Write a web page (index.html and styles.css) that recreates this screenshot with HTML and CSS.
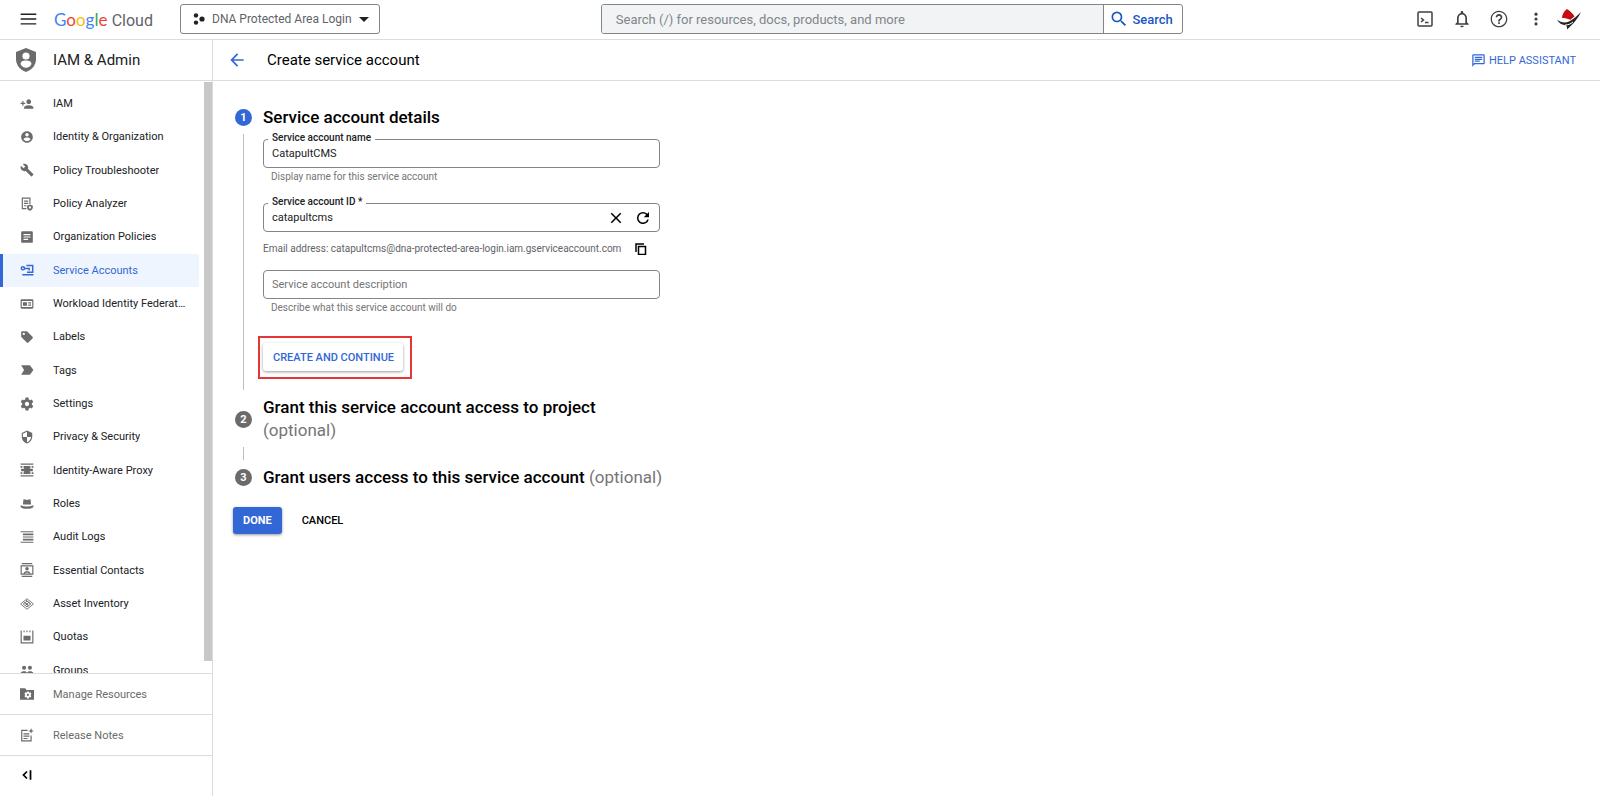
FILE: index.html
```html
<!DOCTYPE html>
<html lang="en">
<head>
    <meta charset="UTF-8">
    <meta name="viewport" content="width=device-width, initial-scale=1.0">
    <title>Create service account - IAM &amp; Admin - Google Cloud</title>
    <link rel="stylesheet" href="styles.css">
</head>
<body>
    <header class="topbar">
        <button class="icon-btn menu-btn" aria-label="Main menu">
            <svg viewBox="0 0 24 24" width="22" height="22"><path d="M4 18h17v-1.500H4zm0-5.200h17v-1.600H4zM4 6v1.500h17V6z"/></svg>
        </button>
        <a href="#" class="logo"><span class="google"><span class="blue">G</span><span class="red">o</span><span class="yellow">o</span><span class="blue">g</span><span class="green">l</span><span class="red">e</span></span> <span class="cloud">Cloud</span></a>
        <button class="project-btn">
            <svg viewBox="0 0 12 12" width="12" height="12"><circle cx="3" cy="2.4" r="2.2"/><circle cx="3" cy="9.6" r="2.2"/><circle cx="9" cy="6" r="2.6"/></svg>
            <span>DNA Protected Area Login</span>
            <svg viewBox="0 0 10 5" width="10" height="5"><path d="M0 0h10L5 5z"/></svg>
        </button>
        <form class="search">
            <input type="text" aria-label="Search" placeholder="Search (/) for resources, docs, products, and more">
            <button type="button">
                <svg viewBox="0 0 24 24" width="20" height="20"><path d="M15.500 14h-.79l-.28-.27A6.471 6.471 0 0 0 16 9.500 6.500 6.500 0 1 0 9.500 16c1.610 0 3.090-.59 4.230-1.570l.27.28v.79l5 4.990L20.490 19l-4.990-5zm-6 0C7.010 14 5 11.990 5 9.500S7.010 5 9.500 5 14 7.010 14 9.500 11.990 14 9.500 14z"/></svg>
                Search
            </button>
        </form>
        <div class="actions">
            <button class="icon-btn" aria-label="Cloud Shell">
                <svg viewBox="0 0 16 16" width="16" height="16" class="line-icon"><rect x="1" y="1" width="14" height="14" rx="1"/><path d="M4 7l2.500 2L4 11M8 11.500h3.500"/></svg>
            </button>
            <button class="icon-btn" aria-label="Notifications">
                <svg viewBox="0 0 24 24" width="20" height="20"><path d="M12 22c1.100 0 2-.9 2-2h-4c0 1.100.9 2 2 2zm6-6v-5c0-3.070-1.630-5.640-4.500-6.320V4c0-.83-.67-1.500-1.500-1.500s-1.500.67-1.500 1.500v.68C7.640 5.360 6 7.920 6 11v5l-2 2v1h16v-1l-2-2zm-2 1H8v-6c0-2.480 1.510-4.500 4-4.500s4 2.020 4 4.500v6z"/></svg>
            </button>
            <button class="icon-btn" aria-label="Help">
                <svg viewBox="0 0 24 24" width="20" height="20"><path d="M11 18h2v-2h-2v2zm1-16C6.480 2 2 6.480 2 12s4.480 10 10 10 10-4.480 10-10S17.520 2 12 2zm0 18.500c-4.700 0-8.500-3.800-8.500-8.500s3.800-8.500 8.500-8.500 8.500 3.800 8.500 8.500-3.800 8.500-8.500 8.500zm0-14.500c-2.210 0-4 1.790-4 4h2c0-1.100.9-2 2-2s2 .9 2 2c0 2-3 1.750-3 5h2c0-2.250 3-2.500 3-5 0-2.210-1.790-4-4-4z"/></svg>
            </button>
            <button class="icon-btn" aria-label="More options">
                <svg viewBox="0 0 24 24" width="18" height="18"><circle cx="12" cy="5.500" r="2.100"/><circle cx="12" cy="12" r="2.100"/><circle cx="12" cy="18.500" r="2.100"/></svg>
            </button>
            <button class="icon-btn avatar" aria-label="Account">
                <svg viewBox="0 0 24 22" width="24" height="22">
                    <path fill="#c30d10" d="M5 10C5 6.500 7 3 10 1c3 2 6 4.500 7.500 7.500L13 12c-2-1.500-5-2-8-2z"/>
                    <path fill="#222" d="M0 11.500c3.500 3 8 3.800 12 2 5-2.500 8-5.500 12-9.500-3 6-7 11.500-14 17.500.2-1.500 0-2.500-.8-4C5 17 1.500 15 0 11.500z"/>
                    <path fill="none" stroke="#fff" d="M1.500 11.500c3 2 7.500 2.300 11 .3M8 17c3 0 5.500-.8 8-3"/>
                </svg>
            </button>
        </div>
    </header>

    <div class="layout">
        <aside class="sidebar">
            <div class="section-title">
                <svg viewBox="0 0 20 24" width="20" height="24"><path fill="#6b6b6b" d="M10 0l10 4v7c0 6-4 11-10 13C4 22 0 17 0 11V4z"/><circle cx="10" cy="8" r="3.600" fill="#fff"/><path fill="#fff" d="M10 12.500c3 0 5.500 1 5.500 3.500-1.200 2.500-3 3.800-5.500 3.800S5.700 18.500 4.500 16c0-2.500 2.500-3.500 5.500-3.500z"/></svg>
                <span>IAM &amp; Admin</span>
            </div>
            <div class="nav-area">
                <nav>
                    <a href="#"><svg viewBox="0 0 24 24"><path d="M15 12c2.210 0 4-1.790 4-4s-1.790-4-4-4-4 1.790-4 4 1.790 4 4 4zm-9-2V7H4v3H1v2h3v3h2v-3h3v-2H6zm9 4c-2.670 0-8 1.340-8 4v2h16v-2c0-2.660-5.330-4-8-4z"/></svg><span>IAM</span></a>
                    <a href="#"><svg viewBox="0 0 24 24"><path d="M12 2C6.480 2 2 6.480 2 12s4.480 10 10 10 10-4.480 10-10S17.520 2 12 2zm0 3c1.660 0 3 1.340 3 3s-1.340 3-3 3-3-1.340-3-3 1.340-3 3-3zm0 14.200c-2.500 0-4.710-1.280-6-3.220.03-1.990 4-3.080 6-3.080 1.990 0 5.970 1.090 6 3.080-1.290 1.940-3.500 3.220-6 3.220z"/></svg><span>Identity &amp; Organization</span></a>
                    <a href="#"><svg viewBox="0 0 24 24"><path d="M22.700 19l-9.100-9.100c.9-2.300.4-5-1.500-6.900-2-2-5-2.400-7.400-1.300L9 6 6 9 1.600 4.700C.4 7.100.9 10.100 2.900 12.100c1.900 1.900 4.600 2.400 6.900 1.500l9.100 9.100c.4.4 1 .4 1.400 0l2.300-2.300c.5-.4.5-1.100.1-1.400z"/></svg><span>Policy Troubleshooter</span></a>
                    <a href="#"><svg viewBox="0 0 24 24"><path d="M3 1h15v11h-2V3H5v16h6v2H3zM7 6h7v2H7zm0 4h7v2H7zm0 4h4v2H7z"/><path d="M17 13l5 2v3c0 2.500-2 4.500-5 5.500-3-1-5-3-5-5.500v-3zm0 3a2 2 0 1 0 0 4 2 2 0 0 0 0-4z" fill-rule="evenodd"/></svg><span>Policy Analyzer</span></a>
                    <a href="#"><svg viewBox="0 0 24 24"><path fill-rule="evenodd" d="M4 2h16a2 2 0 0 1 2 2v16a2 2 0 0 1-2 2H4a2 2 0 0 1-2-2V4a2 2 0 0 1 2-2zm2 5v2h12V7zm0 4v2h12v-2zm0 4v2h8v-2z"/></svg><span>Organization Policies</span></a>
                    <a href="#" class="active"><svg viewBox="0 0 24 24"><path d="M11 3h12v14H12v-2.500h8.500v-9H11z"/><path d="M5 5a4 4 0 1 1 0 8 4 4 0 0 1 0-8zm0 2.500a1.500 1.500 0 1 0 0 3 1.500 1.500 0 0 0 0-3z" fill-rule="evenodd"/><path d="M8 8h9v5h-2.500v-2.500H8zM4 19h19v2.500H4z"/></svg><span>Service Accounts</span></a>
                    <a href="#"><svg viewBox="0 0 24 24"><path fill-rule="evenodd" d="M3 4h18a2 2 0 0 1 2 2v12a2 2 0 0 1-2 2H3a2 2 0 0 1-2-2V6a2 2 0 0 1 2-2zm0 3v10h18V7z"/><path d="M5 9h7v6H5zM14 9h5v2h-5zM14 13h5v2h-5z"/></svg><span>Workload Identity Federation</span></a>
                    <a href="#"><svg viewBox="0 0 24 24"><path d="M21.410 11.580l-9-9C12.050 2.220 11.550 2 11 2H4c-1.100 0-2 .9-2 2v7c0 .55.22 1.050.59 1.420l9 9c.36.36.86.58 1.410.58s1.050-.22 1.410-.59l7-7c.37-.36.59-.86.59-1.410s-.23-1.060-.59-1.420zM6.500 8.500a2 2 0 1 1 0-4 2 2 0 0 1 0 4z"/></svg><span>Labels</span></a>
                    <a href="#"><svg viewBox="0 0 24 24"><path d="M2 4h14c.9 0 1.500.4 2 1l5 7-5 7c-.5.600-1.100 1-2 1H2l5-8z"/></svg><span>Tags</span></a>
                    <a href="#"><svg viewBox="0 0 24 24"><path fill-rule="evenodd" d="M9.500 1h5l.6 3.200 2.100 1.200L20.300 4.300l2.500 4.300-2.500 2.200v2.400l2.500 2.200-2.500 4.300-3.100-1.100-2.100 1.200-.6 3.200h-5l-.6-3.200-2.100-1.200-3.100 1.100-2.500-4.300 2.500-2.200v-2.400L1.200 8.600l2.500-4.300 3.100 1.100 2.100-1.200zM12 8.300a3.700 3.700 0 1 0 0 7.400 3.700 3.700 0 0 0 0-7.400z"/></svg><span>Settings</span></a>
                    <a href="#"><svg viewBox="0 0 24 24"><path d="M12 1L3 5v6c0 5.550 3.840 10.740 9 12 5.160-1.260 9-6.450 9-12V5l-9-4zm0 10.990h7c-.53 4.120-3.280 7.790-7 8.940V12H5V6.300l7-3.110v8.800z"/></svg><span>Privacy &amp; Security</span></a>
                    <a href="#"><svg viewBox="0 0 24 24"><path d="M1 1h22v2H1zM1 21h22v2H1zM1 5h3v3H1zM6 5h12v3H6zM20 5h3v3h-3zM2 10h20v4H2zM7 8h10v8H7zM1 16h3v3H1zM6 16h12v3H6zM20 16h3v3h-3z"/></svg><span>Identity-Aware Proxy</span></a>
                    <a href="#"><svg viewBox="0 0 24 24"><path d="M6 4c2 0 4 1 6 1s4-1 6-1l1 9H5zM1 14c7 3 15 3 22 0v3c-3 2.500-6 3-11 3S4 19.500 1 17z"/></svg><span>Roles</span></a>
                    <a href="#"><svg viewBox="0 0 24 24"><path d="M1 2h22v2H1zM5 6h18v3H5zM5 11h18v2H5zM5 15h18v3H5zM1 20h22v2H1z"/></svg><span>Audit Logs</span></a>
                    <a href="#"><svg viewBox="0 0 24 24"><path d="M3 0h18v2H3zM3 22h18v2H3z"/><path fill-rule="evenodd" d="M1 4h22v16H1zm2 2v12h3c1-3 3-4 6-4s5 1 6 4h3V6zm9 1a3 3 0 1 1 0 6 3 3 0 0 1 0-6zm-4 11h8c-1-2-7-2-8 0z"/></svg><span>Essential Contacts</span></a>
                    <a href="#"><svg viewBox="0 0 24 24"><g fill="none" stroke="#6b6b6b" stroke-width="1.500"><path d="M12 3l11 9-11 9L1 12z"/><path d="M12 7l6.500 5-6.500 5-6.500-5z"/><path d="M12 10.500l2 1.500-2 1.500-2-1.500zM6 8l8 7M10 5l8 7"/></g></svg><span>Asset Inventory</span></a>
                    <a href="#"><svg viewBox="0 0 24 24"><path d="M1 1h2v20h18V1h2v22H1zM6 1h2v3H6zM11 1h2v3h-2zM16 1h2v3h-2zM6 10h12v8H6z"/></svg><span>Quotas</span></a>
                    <a href="#"><svg viewBox="0 0 24 24"><circle cx="7" cy="8" r="3.500"/><circle cx="17" cy="8" r="3.500"/><path d="M1 20v-2c0-3 3-4 6-4s5 1 5 4c0-3 2-4 5-4s6 1 6 4v2z"/></svg><span>Groups</span></a>
                </nav>
                <div class="scroll-track"><div class="scroll-thumb"></div></div>
            </div>
            <div class="sidebar-footer">
                <a href="#"><svg viewBox="0 0 24 24"><path fill-rule="evenodd" d="M0 2h9l2 3h13v17H0zm12 5.500l-.7 2.200-2.200-.5-1.500 2.500L9.200 13.500l-1.600 1.800 1.500 2.500 2.200-.5.700 2.200h3l.7-2.200 2.200.5 1.500-2.500-1.600-1.800 1.600-1.800-1.500-2.500-2.200.5-.7-2.200zm1.500 4.200a1.800 1.800 0 1 1 0 3.600 1.800 1.800 0 0 1 0-3.600z"/></svg><span>Manage Resources</span></a>
                <a href="#"><svg viewBox="0 0 24 24"><path d="M2 3h11v2H4v16h14v-8h2v10H2zM6 9h10v2H6zM6 13h10v2H6zM6 17h7v2H6zM19 0l1.300 3.700L24 5l-3.700 1.300L19 10l-1.300-3.700L14 5l3.700-1.300z"/></svg><span>Release Notes</span></a>
                <button aria-label="Collapse menu"><svg viewBox="0 0 24 24"><path fill="none" stroke="#000" stroke-width="3" d="M12 6l-6 6 6 6M18 4v16"/></svg></button>
            </div>
        </aside>

        <main>
            <div class="page-header">
                <a href="#" class="back" aria-label="Back"><svg viewBox="0 0 24 24" width="20" height="20"><path d="M20 11H7.830l5.590-5.590L12 4l-8 8 8 8 1.410-1.410L7.830 13H20v-2z"/></svg></a>
                <h1>Create service account</h1>
                <button class="help-btn">
                    <svg viewBox="0 0 24 24" width="15" height="15"><path d="M4 4h16v12H5.170L4 17.170V4m0-2c-1.100 0-1.990.9-1.990 2L2 22l4-4h14c1.100 0 2-.9 2-2V4c0-1.100-.9-2-2-2H4zm2 10h8v2H6v-2zm0-3h12v2H6V9zm0-3h12v2H6V6z"/></svg>
                    HELP ASSISTANT
                </button>
            </div>

            <form class="stepper">
                <section class="step">
                    <span class="number current">1</span>
                    <h2>Service account details</h2>
                    <div class="line"></div>
                    <div class="step-body">
                        <div class="field">
                            <label for="account-name">Service account name</label>
                            <input type="text" id="account-name" value="CatapultCMS">
                        </div>
                        <p class="hint">Display name for this service account</p>
                        <div class="field">
                            <label for="account-id">Service account ID *</label>
                            <input type="text" id="account-id" value="catapultcms">
                            <button type="button" class="icon-btn" aria-label="Clear"><svg viewBox="0 0 24 24" width="18" height="18"><path d="M19 6.410L17.590 5 12 10.590 6.410 5 5 6.410 10.590 12 5 17.590 6.410 19 12 13.410 17.590 19 19 17.590 13.410 12z"/></svg></button>
                            <button type="button" class="icon-btn" aria-label="Generate new ID"><svg viewBox="0 0 24 24" width="18" height="18"><path d="M17.650 6.350A7.958 7.958 0 0 0 12 4a8 8 0 1 0 7.730 10h-2.080A5.990 5.990 0 0 1 12 18c-3.310 0-6-2.690-6-6s2.690-6 6-6c1.660 0 3.140.69 4.220 1.780L13 11h7V4l-2.350 2.350z"/></svg></button>
                        </div>
                        <div class="email">
                            <span>Email address: catapultcms@dna-protected-area-login.iam.gserviceaccount.com</span>
                            <button type="button" class="icon-btn" aria-label="Copy"><svg viewBox="0 0 12 12" width="12" height="12" class="line-icon"><path d="M1 9V1h8M3.500 3.500h7v8h-7z"/></svg></button>
                        </div>
                        <div class="field">
                            <input type="text" aria-label="Service account description" placeholder="Service account description">
                        </div>
                        <p class="hint">Describe what this service account will do</p>
                        <div class="highlight">
                            <button type="button" class="create-btn">CREATE AND CONTINUE</button>
                        </div>
                    </div>
                </section>
                <section class="step">
                    <span class="number">2</span>
                    <h2>Grant this service account access to project <span class="optional">(optional)</span></h2>
                    <div class="line"></div>
                </section>
                <section class="step">
                    <span class="number">3</span>
                    <h2>Grant users access to this service account <span class="optional">(optional)</span></h2>
                </section>
                <div class="form-actions">
                    <button type="button" class="done-btn">DONE</button>
                    <button type="button" class="cancel-btn">CANCEL</button>
                </div>
            </form>
        </main>
    </div>
</body>
</html>
```

FILE: styles.css
```css
* {
    box-sizing: border-box;
}
body {
    font-family: Roboto, Arial, sans-serif;
    font-size: 11px;
    margin: 0;
    height: 100vh;
    display: flex;
    flex-direction: column;
    color: #202124;
    background-color: white;
}
button, input {
    font-family: inherit;
    font-size: inherit;
    color: inherit;
}
button {
    border: none;
    background: none;
    padding: 0;
    cursor: pointer;
}
a {
    color: inherit;
    text-decoration: none;
}
svg {
    display: block;
    flex-shrink: 0;
    fill: currentColor;
}
h1, h2, p {
    margin: 0;
    font-weight: 400;
}
.icon-btn {
    display: flex;
    align-items: center;
    justify-content: center;
}
.line-icon {
    fill: none;
    stroke: currentColor;
    stroke-width: 1.5;
}

/* top bar */
.topbar {
    display: flex;
    align-items: center;
    height: 40px;
    padding: 0 16px 1px 17px;
    border-bottom: 1px solid #dadce0;
}
.logo {
    margin-left: 15px;
    width: 126px;
    font-size: 17px;
    white-space: nowrap;
}
.google {
    font-family: Lato, sans-serif;
}
.cloud {
    color: #5f6368;
    font-size: 16px;
}
.blue {
    color: #4285f4;
}
.red {
    color: #ea4335;
}
.yellow {
    color: #fbbc05;
}
.green {
    color: #34a853;
}
.project-btn {
    display: flex;
    align-items: center;
    gap: 7px;
    height: 30px;
    padding: 0 10px 0 12px;
    border: 1px solid #80868b;
    border-radius: 3px;
    font-size: 12px;
}
.project-btn span {
    color: #5f6368;
}
.search {
    display: flex;
    width: 582px;
    height: 30px;
    margin: 0 auto;
    border: 1px solid #80868b;
    border-radius: 3px;
    overflow: hidden;
    font-size: 13px;
}
.search input {
    flex: 1;
    min-width: 0;
    border: none;
    padding: 0 14px;
    background-color: #f1f3f4;
}
.search input::placeholder {
    color: #80868b;
}
.search button {
    display: flex;
    align-items: center;
    gap: 3px;
    padding: 0 9px 0 5px;
    border-left: 1px solid #80868b;
    color: #1a56c4;
    font-weight: 500;
}
.actions {
    display: flex;
    align-items: center;
    padding-left: 2px;
}
.actions .icon-btn {
    width: 37px;
    height: 36px;
    color: #3c4043;
}
.actions .avatar {
    width: 30px;
}

/* sidebar */
.layout {
    flex: 1;
    min-height: 0;
    display: flex;
}
.sidebar {
    width: 213px;
    display: flex;
    flex-direction: column;
    border-right: 1px solid #dadce0;
}
.section-title {
    display: flex;
    align-items: center;
    gap: 17px;
    height: 41px;
    padding-left: 16px;
    border-bottom: 1px solid #dadce0;
    font-size: 15px;
}
.nav-area {
    flex: 1;
    min-height: 0;
    display: flex;
    gap: 5px;
    overflow: hidden;
}
nav {
    flex: 1;
    min-width: 0;
    height: 606px;
    padding-top: 6px;
    display: grid;
    grid-template-columns: minmax(0, 1fr);
    grid-auto-rows: 1fr;
}
nav a, .sidebar-footer a, .sidebar-footer button {
    display: flex;
    align-items: center;
    gap: 19px;
    padding: 0 12px 0 20px;
}
nav span {
    overflow: hidden;
    text-overflow: ellipsis;
    white-space: nowrap;
}
nav svg, .sidebar-footer svg {
    width: 14px;
    height: 14px;
    color: #6b6b6b;
}
nav .active {
    color: #3367d6;
    background-color: #eff5fe;
    border-left: 3px solid #3367d6;
    padding-left: 17px;
}
nav .active svg {
    color: #3367d6;
}
.scroll-track {
    width: 8px;
    padding-top: 1px;
}
.scroll-thumb {
    height: 98%;
    background-color: #c8c8c8;
}
.sidebar-footer a, .sidebar-footer button {
    width: 100%;
    height: 41px;
    border-top: 1px solid #dadce0;
    color: #6b6b6b;
}
.sidebar-footer button {
    padding-bottom: 3px;
}

/* main area */
main {
    flex: 1;
    min-width: 0;
}
.page-header {
    display: flex;
    align-items: center;
    height: 41px;
    padding: 0 24px 0 14px;
    border-bottom: 1px solid #dadce0;
}
.page-header h1 {
    margin-left: 20px;
    font-size: 15px;
    color: #000;
}
.back {
    color: #3367d6;
}
.help-btn {
    display: flex;
    align-items: center;
    gap: 3px;
    margin-left: auto;
    color: #3367d6;
}

/* stepper */
.stepper {
    max-width: 474px;
    padding: 25px 22px;
}
.step {
    display: grid;
    grid-template-columns: 17px minmax(0, 1fr);
    column-gap: 11px;
    margin-bottom: 6px;
}
.step h2 {
    font-size: 17px;
    line-height: 23px;
    font-weight: 500;
    color: #000;
}
.step .optional {
    font-weight: 400;
    color: #757575;
}
.number {
    align-self: center;
    height: 17px;
    line-height: 17px;
    border-radius: 50%;
    background-color: #6b6b6b;
    color: white;
    font-weight: 700;
    text-align: center;
}
.number.current {
    background-color: #3367d6;
}
.line {
    justify-self: center;
    width: 1px;
    min-height: 13px;
    margin-top: 5px;
    background-color: #bdbdbd;
}
.step-body {
    max-width: 397px;
    padding: 10px 0 11px;
}
.field {
    position: relative;
    display: flex;
    align-items: center;
    gap: 9px;
    height: 29px;
    padding-right: 7px;
    border: 1px solid #80868b;
    border-radius: 4px;
}
.field label {
    position: absolute;
    top: -9px;
    left: 4px;
    padding: 0 4px;
    background-color: white;
    font-size: 10px;
    line-height: 14px;
    font-weight: 500;
}
.field input {
    flex: 1;
    min-width: 0;
    border: none;
    outline: none;
    padding: 0 0 1px 8px;
    background: none;
}
.field input::placeholder {
    color: #757575;
}
.field .icon-btn {
    color: #000;
}
.hint {
    margin-bottom: 17px;
    padding: 0 8px;
    font-size: 10px;
    line-height: 18px;
    color: #757575;
}
.email {
    display: flex;
    align-items: center;
    gap: 14px;
    margin: 8px 0 13px;
    font-size: 10px;
    line-height: 17px;
    color: #5f6368;
    white-space: nowrap;
}
.email .icon-btn {
    color: #000;
}
.highlight {
    width: fit-content;
    margin: 19px 0 0 -5px;
    padding: 5px 7px 6px 3px;
    border: 2px solid #e53535;
}
.create-btn {
    display: block;
    height: 28px;
    padding: 0 9px 0 10px;
    border-radius: 3px;
    box-shadow: 0 1px 3px rgba(0, 0, 0, 0.4);
    color: #3367d6;
    font-weight: 500;
}
.form-actions {
    display: flex;
    gap: 20px;
    margin: 18px 0 0 -2px;
}
.form-actions button {
    height: 27px;
    font-weight: 500;
}
.form-actions .done-btn {
    padding: 0 10px;
    border-radius: 3px;
    background-color: #3367d6;
    color: white;
    font-weight: 700;
    box-shadow: 0 1px 3px rgba(0, 0, 0, 0.4);
}
.cancel-btn {
    color: #000;
}
```
